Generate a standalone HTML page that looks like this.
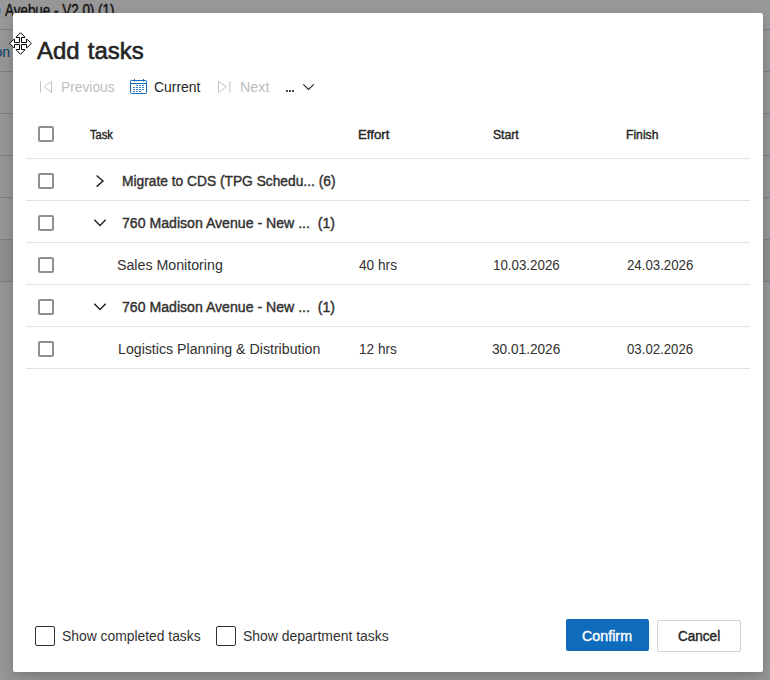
<!DOCTYPE html>
<html><head><meta charset="utf-8">
<style>
*{box-sizing:border-box;margin:0;padding:0}
html,body{width:770px;height:680px;overflow:hidden}
body{position:relative;background:#fff;font-family:"Liberation Sans",sans-serif;color:#323130}
.abs{position:absolute}
#bg{position:absolute;left:0;top:0;width:770px;height:680px;background:#fff}
.pline{position:absolute;left:0;width:770px;height:1px;background:#d3d7e0}
#ov{position:absolute;left:0;top:0;width:770px;height:680px;background:rgba(0,0,0,0.4)}
#dlg{position:absolute;left:13px;top:13px;width:750px;height:659px;background:#fff;border-radius:2px;
 box-shadow:0 12px 28px rgba(0,0,0,.14),0 2px 6px rgba(0,0,0,.12)}
.t{position:absolute;white-space:nowrap;line-height:1;transform-origin:0 0}
.cb{position:absolute;left:38px;width:16px;height:16px;border:2px solid #8f8f8f;border-radius:2px}
.dv{position:absolute;left:26px;width:724px;height:1px;background:#e0e3ec}
.fcb{position:absolute;top:626px;width:20px;height:20px;border:1px solid #323130;border-radius:2px}
</style></head><body>
<div id="bg">
<div id="bg_title" class="t" style="left:4.74px;top:3.40px;font-size:16px;-webkit-text-stroke:0.4px #242424;color:#242424;transform:scaleX(0.8392)">Avebue - V2.0) (1)</div>
<div id="bg_on" class="t" style="left:-5.50px;top:45.00px;font-size:14px;font-weight:normal;color:#0f6cbd;transform:scaleX(1.0000)">on</div>
  <div class="abs" style="left:0;top:240px;width:770px;height:41px;background:#f2f2f2"></div>
  <div class="pline" style="top:29px"></div>
  <div class="pline" style="top:71px"></div>
  <div class="pline" style="top:113px"></div>
  <div class="pline" style="top:155px"></div>
  <div class="pline" style="top:197px"></div>
  <div class="pline" style="top:239px"></div>
  <div class="pline" style="top:281px"></div>
</div>
<div id="ov"></div>
<div class="abs" style="left:0;top:8px;width:1px;height:6px;background:#5b8fae"></div>
<div id="dlg"></div>
<!-- toolbar icons -->
<svg class="abs" style="left:0;top:0" width="770" height="680" viewBox="0 0 770 680">
  <!-- prev -->
  <path d="M40.5 81V92.8" stroke="#c2c2c2" stroke-width="1" fill="none"/>
  <path d="M51.5 81.2L44.2 86.8L51.5 92.5Z" stroke="#c2c2c2" stroke-width="1" fill="none" stroke-linejoin="round"/>
  <!-- next -->
  <path d="M229.9 81V92.8" stroke="#c2c2c2" stroke-width="1" fill="none"/>
  <path d="M218.5 81.2L226.2 86.8L218.5 92.5Z" stroke="#c2c2c2" stroke-width="1" fill="none" stroke-linejoin="round"/>
  <!-- calendar -->
  <g stroke="#0f6cbd" stroke-width="1" fill="none">
    <rect x="130.5" y="80.5" width="16" height="13" rx="0.8"/>
    <path d="M131 83.5H146"/>
    <path d="M134.5 79V81.5M143.5 79V81.5"/>
  </g>
  <g fill="#3b82c9">
    <rect x="136" y="85" width="2" height="1"/><rect x="139" y="85" width="2" height="1"/><rect x="142" y="85" width="2" height="1"/>
    <rect x="133" y="87" width="2" height="1"/><rect x="136" y="87" width="2" height="1"/><rect x="139" y="87" width="2" height="1"/><rect x="142" y="87" width="2" height="1"/>
    <rect x="133" y="89" width="2" height="1"/><rect x="136" y="89" width="2" height="1"/><rect x="139" y="89" width="2" height="1"/><rect x="142" y="89" width="2" height="1"/>
    <rect x="133" y="91" width="2" height="1"/><rect x="136" y="91" width="2" height="1"/><rect x="139" y="91" width="2" height="1"/>
  </g>
  <!-- dots -->
  <g fill="#4a4a4a"><rect x="286" y="90" width="2" height="2"/><rect x="289" y="90" width="2" height="2"/><rect x="292" y="90" width="2" height="2"/></g>
  <!-- chevron -->
  <path d="M303.3 84.4L308.5 89.5L313.8 84.4" stroke="#242424" stroke-width="1.1" fill="none"/>
  <!-- row chevrons -->
  <path d="M96.6 175.5L103 181L96.6 186.6" stroke="#1f1f1f" stroke-width="1.4" fill="none"/>
  <path d="M94.3 219.8L100 225.6L105.7 219.8" stroke="#1f1f1f" stroke-width="1.4" fill="none"/>
  <path d="M94.3 303.8L100 309.6L105.7 303.8" stroke="#1f1f1f" stroke-width="1.4" fill="none"/>
</svg>
<div class="cb" style="top:126px"></div>
<div class="cb" style="top:173px"></div>
<div class="cb" style="top:215px"></div>
<div class="cb" style="top:257px"></div>
<div class="cb" style="top:299px"></div>
<div class="cb" style="top:341px"></div>
<div class="dv" style="top:158px"></div>
<div class="dv" style="top:200px"></div>
<div class="dv" style="top:242px"></div>
<div class="dv" style="top:284px"></div>
<div class="dv" style="top:326px"></div>
<div class="dv" style="top:368px"></div>
<div class="fcb" style="left:35px"></div>
<div class="fcb" style="left:216px"></div>
<div class="abs" style="left:566px;top:619px;width:83px;height:32px;background:#0f6cbd;border-radius:2px"></div>
<div class="abs" style="left:657px;top:620px;width:84px;height:32px;border:1px solid #d1d1d1;border-radius:2px"></div>
<div id="title" class="t" style="left:36.55px;top:39.05px;font-size:24px;-webkit-text-stroke:0.6px #242424;color:#242424;transform:scaleX(0.9981)">Add<span style="margin-left:1.5px"></span> tasks</div>
<div id="prev" class="t" style="left:60.63px;top:80.27px;font-size:14px;font-weight:normal;color:#bdbdbd;transform:scaleX(0.9842)">Previous</div>
<div id="cur" class="t" style="left:153.65px;top:80.36px;font-size:14px;font-weight:normal;color:#242424;transform:scaleX(0.9923)">Current</div>
<div id="next" class="t" style="left:239.52px;top:80.15px;font-size:14px;font-weight:normal;color:#bdbdbd;transform:scaleX(1.0230)">Next</div>
<div id="h_task" class="t" style="left:89.53px;top:129.47px;font-size:12.5px;-webkit-text-stroke:0.4px #242424;color:#242424;transform:scaleX(0.8894)">Task</div>
<div id="h_eff" class="t" style="left:357.60px;top:129.46px;font-size:12.5px;-webkit-text-stroke:0.4px #242424;color:#242424;transform:scaleX(1.0567)">Effort</div>
<div id="h_start" class="t" style="left:492.63px;top:129.45px;font-size:12.5px;-webkit-text-stroke:0.4px #242424;color:#242424;transform:scaleX(0.9742)">Start</div>
<div id="h_fin" class="t" style="left:625.70px;top:129.45px;font-size:12.5px;-webkit-text-stroke:0.4px #242424;color:#242424;transform:scaleX(0.9719)">Finish</div>
<div id="r1" class="t" style="left:121.70px;top:173.57px;font-size:14px;-webkit-text-stroke:0.4px #323130;color:#323130;transform:scaleX(0.9834)">Migrate to CDS (TPG Schedu... (6)</div>
<div id="r2" class="t" style="left:121.55px;top:215.69px;font-size:14px;-webkit-text-stroke:0.4px #323130;color:#323130;transform:scaleX(1.0074)">760 Madison Avenue - New ...&nbsp;&nbsp;(1)</div>
<div id="r3" class="t" style="left:116.65px;top:258.16px;font-size:14px;font-weight:normal;color:#323130;transform:scaleX(1.0145)">Sales Monitoring</div>
<div id="r3e" class="t" style="left:358.73px;top:258.18px;font-size:14px;font-weight:normal;color:#323130;transform:scaleX(0.9762)">40 hrs</div>
<div id="r3s" class="t" style="left:492.70px;top:258.26px;font-size:14px;font-weight:normal;color:#323130;transform:scaleX(0.9525)">10.03.2026</div>
<div id="r3f" class="t" style="left:626.55px;top:258.26px;font-size:14px;font-weight:normal;color:#323130;transform:scaleX(0.9471)">24.03.2026</div>
<div id="r4" class="t" style="left:121.55px;top:299.69px;font-size:14px;-webkit-text-stroke:0.4px #323130;color:#323130;transform:scaleX(1.0074)">760 Madison Avenue - New ...&nbsp;&nbsp;(1)</div>
<div id="r5" class="t" style="left:117.63px;top:342.36px;font-size:14px;font-weight:normal;color:#323130;transform:scaleX(1.0118)">Logistics Planning &amp; Distribution</div>
<div id="r5e" class="t" style="left:358.57px;top:342.42px;font-size:14px;font-weight:normal;color:#323130;transform:scaleX(0.9741)">12 hrs</div>
<div id="r5s" class="t" style="left:491.64px;top:342.49px;font-size:14px;font-weight:normal;color:#323130;transform:scaleX(0.9748)">30.01.2026</div>
<div id="r5f" class="t" style="left:626.51px;top:342.47px;font-size:14px;font-weight:normal;color:#323130;transform:scaleX(0.9442)">03.02.2026</div>
<div id="f1" class="t" style="left:61.66px;top:628.61px;font-size:14px;font-weight:normal;color:#323130;transform:scaleX(0.9898)">Show completed tasks</div>
<div id="f2" class="t" style="left:242.50px;top:628.61px;font-size:14px;font-weight:normal;color:#323130;transform:scaleX(0.9957)">Show department tasks</div>
<div id="confirm" class="t" style="left:581.73px;top:628.54px;font-size:14px;-webkit-text-stroke:0.4px #ffffff;color:#ffffff;transform:scaleX(1.0210)">Confirm</div>
<div id="cancel" class="t" style="left:677.67px;top:628.52px;font-size:14px;-webkit-text-stroke:0.4px #242424;color:#242424;transform:scaleX(0.9676)">Cancel</div>
<!-- cursor -->
<svg class="abs" style="left:0;top:0" width="40" height="70" viewBox="0 0 40 70">
  <path transform="translate(20.5 43.5)" d="M0-10.8L4.3-6.5V-6H1V-1H6V-4.3H6.5L10.8 0L6.5 4.3H6V1H1V6H4.3V6.5L0 10.8L-4.3 6.5V6H-1V1H-6V4.3H-6.5L-10.8 0L-6.5-4.3H-6V-1H-1V-6H-4.3V-6.5Z" fill="#fff" stroke="#000" stroke-width="1" stroke-linejoin="miter"/>
</svg>
</body></html>
